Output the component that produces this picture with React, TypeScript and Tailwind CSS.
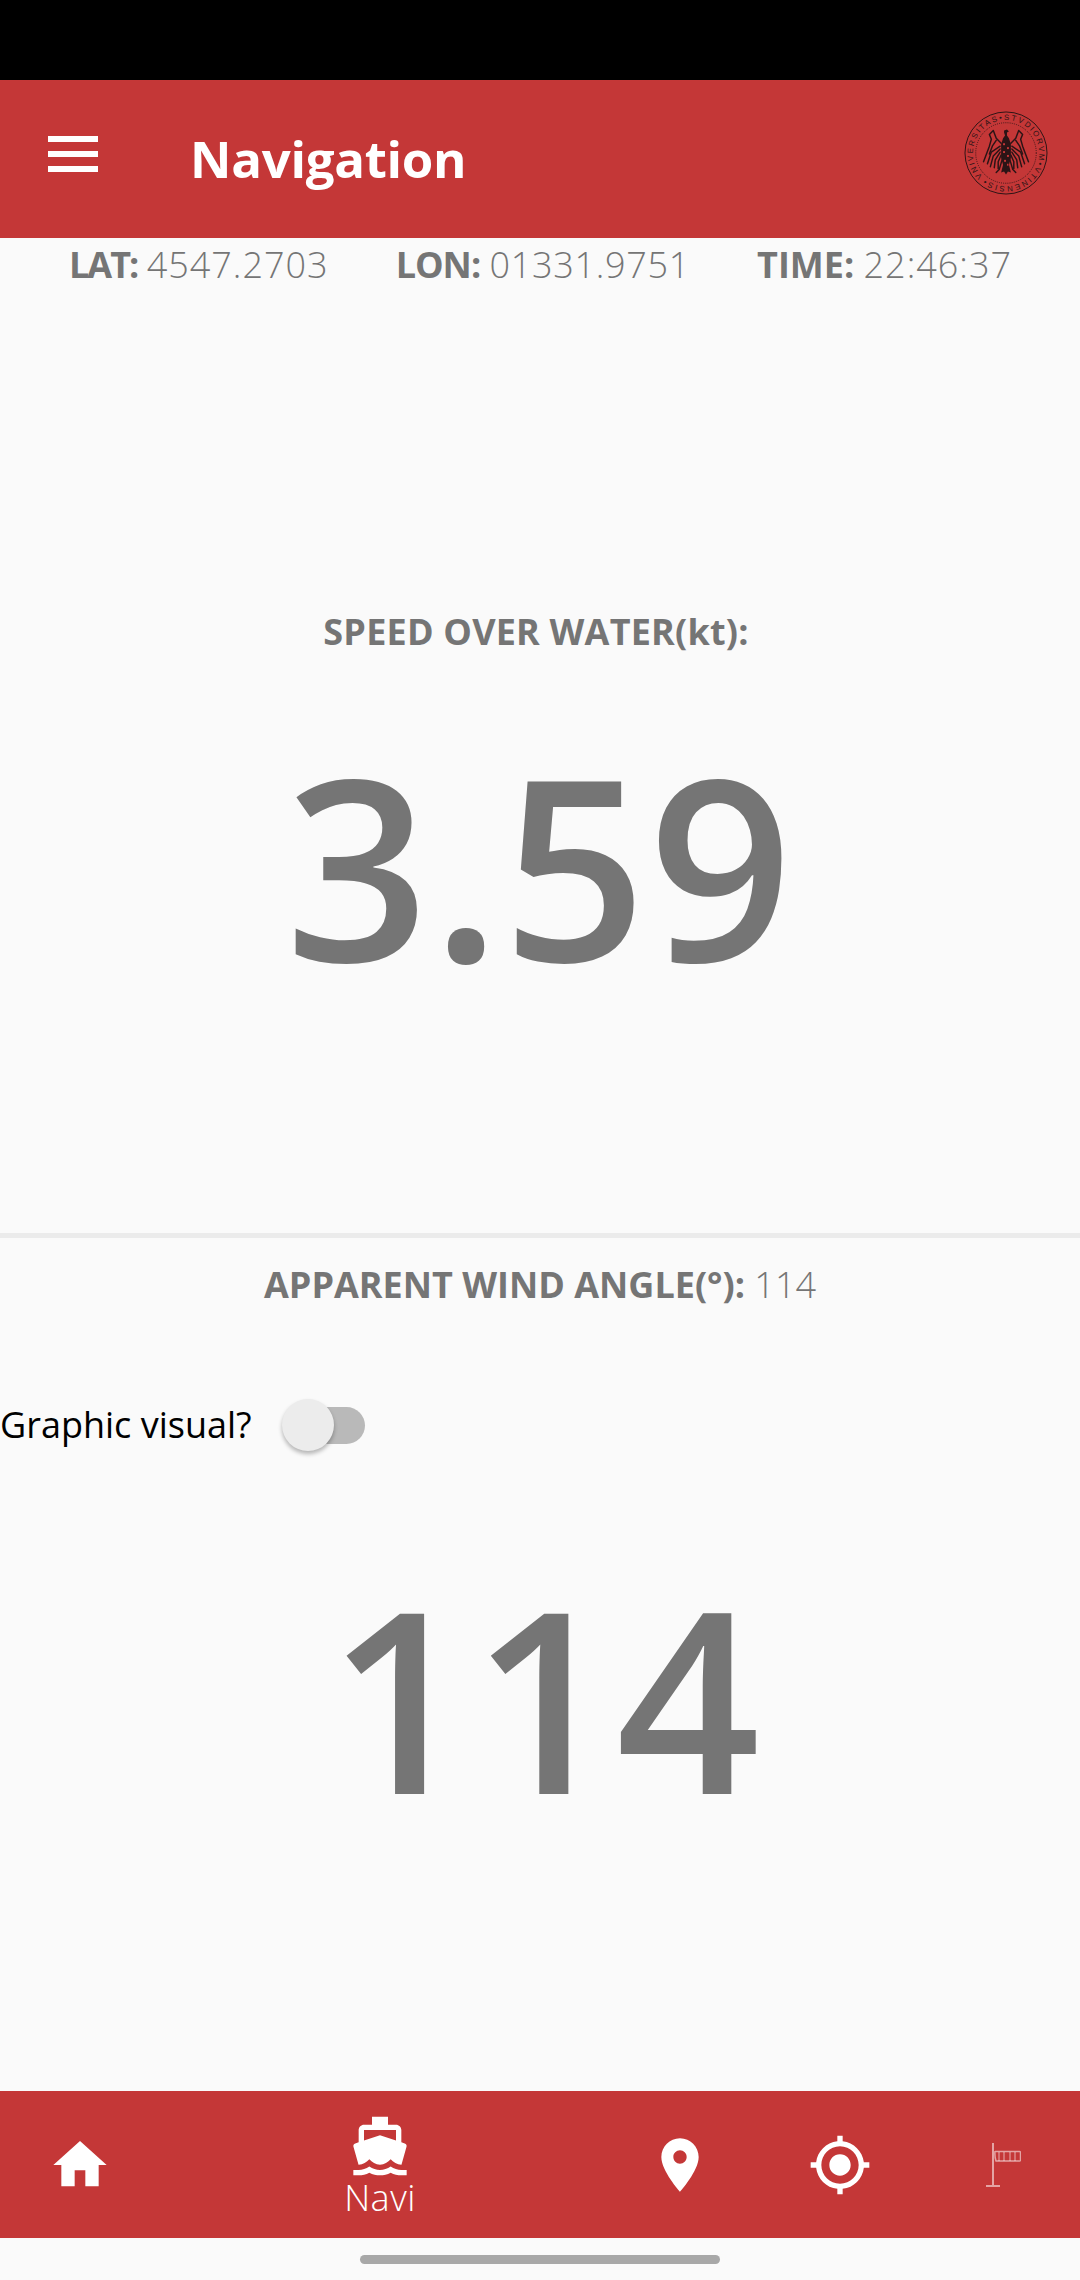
import React from "react";

function EagleWing() {
  return (
    <g fill="none" stroke="#2b1416" strokeWidth="1.5" strokeLinecap="round" strokeLinejoin="round">
      <path d="M38 33L33 28L30 20L26 24L28 29L26 36L23 44L20 52" />
      <path d="M37 36L28 42L24 54" />
      <path d="M37 39L30 46L27 57" />
      <path d="M37 42L32 50L31 58" />
      <path d="M38 45L35 52L35 59" />
      <path d="M33 30L29 36L26 44" />
      <path d="M39 50L36 60L33 63" />
    </g>
  );
}

function Logo() {
  return (
    <svg width="84" height="84" viewBox="0 0 86 86" className="block">
      <defs>
        <path id="ring" d="M19 67A33.9 33.9 0 1 1 67 67A33.9 33.9 0 0 1 19 67" />
      </defs>
      <g fill="none" stroke="#2b1416">
        <circle cx="43" cy="43" r="42" strokeWidth="1" />
        <circle cx="43" cy="43" r="31" strokeWidth="0.9" strokeDasharray="1 1.2" />
      </g>
      <text fontSize="8" fill="#2b1416" fontFamily="'Liberation Sans', sans-serif" textLength="208" lengthAdjust="spacing">
        <textPath href="#ring">VNIVERSITAS•STVDIORVM•VTINENSIS•</textPath>
      </text>
      <EagleWing />
      <g transform="matrix(-1 0 0 1 86 0)">
        <EagleWing />
      </g>
      <path fill="#2b1416" d="M41 20l3-1 2 2-2 1 0 3 2 3 2 6 0 14-2 7 2 8-3-1-2 3-2-3-3 1 2-8-2-7V34l2-6 2-3-1-3z" />
      <g fill="#c43737">
        <rect x="40" y="33" width="2" height="2" />
        <rect x="44" y="37" width="2" height="2" />
        <rect x="40" y="41" width="2" height="2" />
        <rect x="44" y="45" width="2" height="2" />
        <rect x="41" y="50" width="2" height="2" />
        <rect x="44" y="54" width="1.5" height="2" />
      </g>
    </svg>
  );
}

function Icon({ d, size }: { d: string; size: number }) {
  return (
    <svg width={size} height={size} viewBox="0 0 24 24" fill="#ffffff" className="block">
      <path d={d} />
    </svg>
  );
}

function Windsock() {
  return (
    <svg width="36" height="46" viewBox="0 0 36 46" fill="none" stroke="#ffffff" strokeOpacity="0.55" className="block">
      <path d="M8 1v42" strokeWidth="2" />
      <path d="M1 44h14" strokeWidth="2" />
      <path d="M10 9.5h24.5a1 1 0 0 1 1 1v7a1 1 0 0 1-1 1.5H11q-1.5-4.5-1-10z" strokeWidth="1.5" />
      <path d="M14 10v9M19 10v9M25 10v9M30 10v9" strokeWidth="1.1" />
    </svg>
  );
}

export default function App() {
  return (
    <div className="w-[1080px] h-[2280px] flex flex-col bg-[#fafafa] overflow-hidden font-['Open_Sans',sans-serif] text-[#757575]">
      <div className="h-20 bg-black" />

      <header className="h-[158px] bg-[#c43737] flex items-start shrink-0">
        <div className="ml-[48px] mt-[56px] w-[50px] flex flex-col gap-[9px]">
          <div className="h-[6px] bg-white" />
          <div className="h-[6px] bg-white" />
          <div className="h-[6px] bg-white" />
        </div>
        <h1 className="ml-[92px] mt-[44px] text-[51px] leading-[68px] font-bold text-white tracking-[-0.3px]">Navigation</h1>
        <div className="ml-auto mr-[32px] mt-[31px]">
          <Logo />
        </div>
      </header>

      <section className="h-[995px] shrink-0 flex flex-col items-center">
        <div className="w-full flex pl-[69px] gap-[67px] text-[36px] leading-[50px] mt-[2px]">
          <span><b className="font-bold tracking-[-2px]">LAT:</b> <span className="font-light tracking-[1px]">4547.2703</span></span>
          <span><b className="font-bold tracking-[-1px]">LON:</b> <span className="font-light tracking-[0.7px]">01331.9751</span></span>
          <span><b className="font-bold">TIME:</b> <span className="font-light tracking-[1px]">22:46:37</span></span>
        </div>
        <div className="mt-[317px] text-[36px] leading-[50px] font-bold tracking-[0.2px] -translate-x-[4px]">SPEED OVER WATER(kt):</div>
        <div className="mt-[58px] text-[252px] leading-[300px] font-[650] tracking-[2px]">3.59</div>
      </section>

      <div className="h-[5px] bg-[#ebebeb] shrink-0" />

      <section className="flex-1 flex flex-col">
        <div className="text-center text-[36px] leading-[50px] mt-[22px]">
          <b className="font-bold">APPARENT WIND ANGLE(°):</b> <span className="font-light">114</span>
        </div>
        <div className="flex items-center mt-[85px] h-[60px]">
          <span className="text-[36px] leading-[50px] text-black">Graphic visual?</span>
          <div className="relative ml-[30px] w-[83px] h-[37px]">
            <div className="absolute left-[12px] top-0 w-[71px] h-[37px] rounded-full bg-[#b9b9b9]" />
            <div className="absolute left-0 top-[-8px] w-[52px] h-[52px] rounded-full bg-[#ececec] shadow-[0_3px_4px_rgba(0,0,0,0.28)]" />
          </div>
        </div>
        <div className="text-center text-[252px] leading-[300px] font-[650] mt-[92px] pl-[8px]">114</div>
      </section>

      <nav className="h-[147px] bg-[#c43737] shrink-0 flex items-center text-white">
        <div className="w-[160px] flex justify-center">
          <Icon size={64} d="M10 20v-6h4v6h5v-8h3L12 3 2 12h3v8z" />
        </div>
        <div className="w-[440px] flex flex-col items-center pt-[2px]">
          <Icon size={64} d="M20 21c-1.39 0-2.78-.47-4-1.32-2.44 1.71-5.56 1.71-8 0C6.78 20.53 5.39 21 4 21H2v2h2c1.38 0 2.74-.35 4-.99 2.52 1.29 5.48 1.29 8 0 1.26.65 2.62.99 4 .99h2v-2h-2zM3.95 19H4c1.6 0 3.02-.88 4-2 .98 1.12 2.4 2 4 2s3.02-.88 4-2c.98 1.12 2.4 2 4 2h.05l1.89-6.68c.08-.26.06-.54-.06-.78s-.34-.42-.6-.5L20 10.62V6c0-1.1-.9-2-2-2h-3V1H9v3H6c-1.1 0-2 .9-2 2v4.62l-1.29.42c-.26.08-.48.26-.6.5s-.15.52-.06.78L3.95 19zM6 6h12v3.97L12 8 6 9.97V6z" />
          <span className="text-[36px] leading-[40px] font-light tracking-[0.5px]">Navi</span>
        </div>
        <div className="w-[160px] flex justify-center">
          <Icon size={64} d="M12 2C8.13 2 5 5.13 5 9c0 5.25 7 13 7 13s7-7.75 7-13c0-3.87-3.13-7-7-7zm0 9.5c-1.38 0-2.5-1.12-2.5-2.5s1.12-2.5 2.5-2.5 2.5 1.12 2.5 2.5-1.12 2.5-2.5 2.5z" />
        </div>
        <div className="w-[160px] flex justify-center">
          <Icon size={64} d="M12 8c-2.21 0-4 1.79-4 4s1.79 4 4 4 4-1.79 4-4-1.79-4-4-4zm8.94 3c-.46-4.17-3.77-7.48-7.94-7.94V1h-2v2.06C6.83 3.52 3.52 6.83 3.06 11H1v2h2.06c.46 4.17 3.77 7.48 7.94 7.94V23h2v-2.06c4.17-.46 7.48-3.77 7.94-7.94H23v-2h-2.06zM12 19c-3.87 0-7-3.13-7-7s3.13-7 7-7 7 3.13 7 7-3.13 7-7 7z" />
        </div>
        <div className="w-[160px] flex justify-center pl-[6px]">
          <Windsock />
        </div>
      </nav>

      <div className="h-[42px] shrink-0 flex justify-center pt-[17px]">
        <div className="w-[360px] h-[9px] rounded-full bg-[#a8a8a8]" />
      </div>
    </div>
  );
}
